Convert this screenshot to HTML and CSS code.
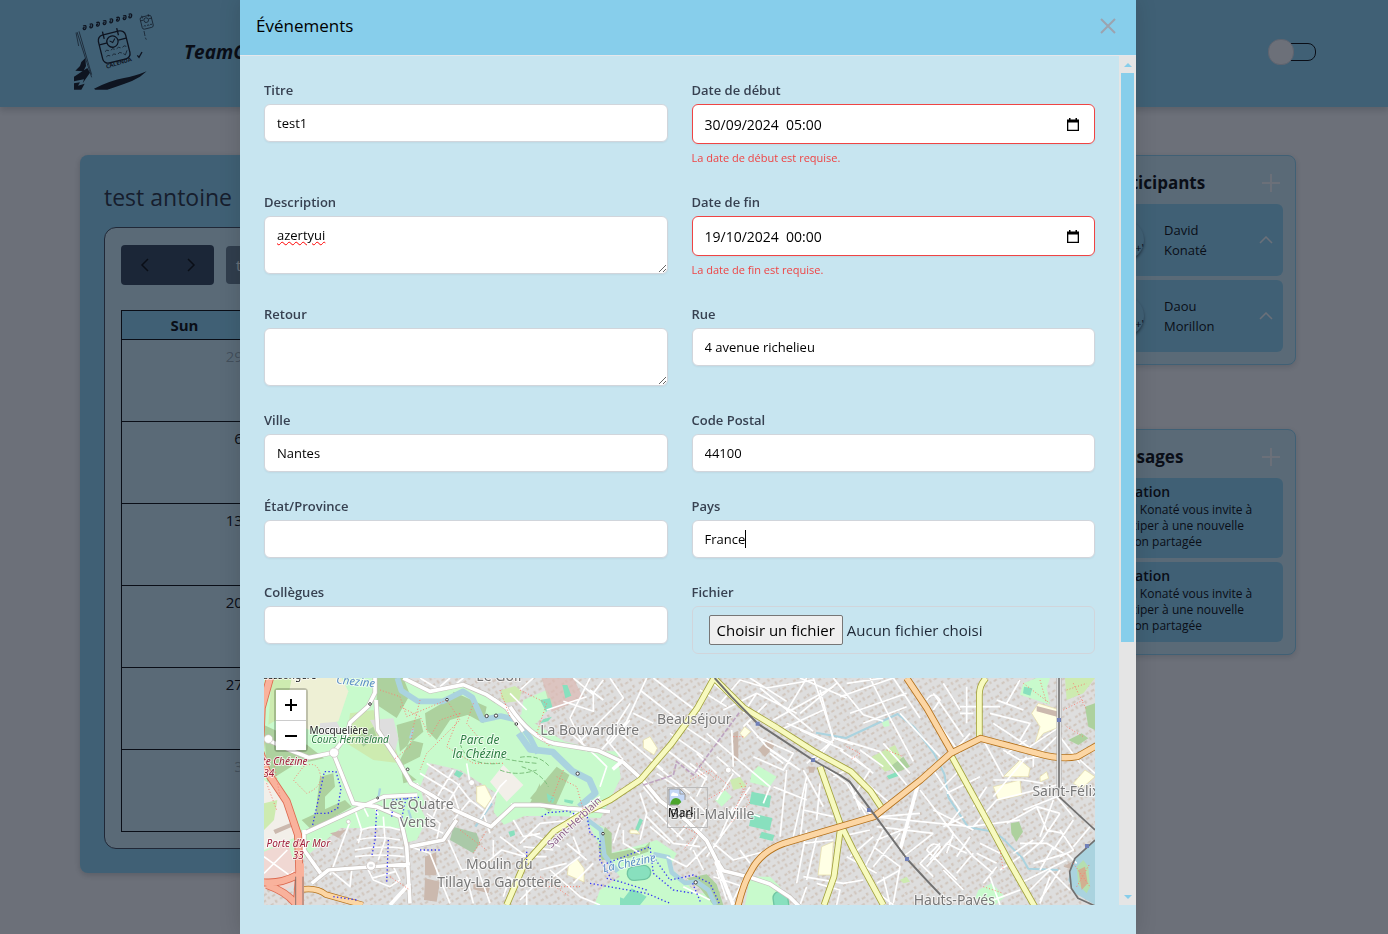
FILE: index.html
```html
<!DOCTYPE html>
<html lang="fr">
<head>
<meta charset="utf-8">
<title>TeamCalenda</title>
<link rel="stylesheet" href="styles.css">
</head>
<body>
<header class="topbar">
  <svg class="logo" viewBox="0 0 240 240" aria-hidden="true">
    <g fill="none" stroke="#0a0f18" stroke-width="3">
      <path stroke-width="2" d="M9 60l44 136M15 58l38 130M6 62l8 40"/>
      <g stroke-width="4">
        <path d="M27 42q10-4 9 4t-7 6q-4-4 3-6M47 37q10-4 9 4t-7 6q-4-4 3-6M67 32q10-4 9 4t-7 6q-4-4 3-6M87 27q10-4 9 4t-7 6q-4-4 3-6M107 22q10-4 9 4t-7 6q-4-4 3-6M127 17q10-4 9 4t-7 6q-4-4 3-6M147 12q10-4 9 4t-7 6q-4-4 3-6M164 7q10-4 9 4t-7 6q-4-4 3-6"/>
      </g>
      <g transform="rotate(-14 120 103)">
        <rect x="78" y="62" width="84" height="86" rx="16" stroke-width="4"/>
        <path stroke-width="4" d="M97 52v22M141 52v22M79 88h24M137 88h24"/>
        <circle cx="119" cy="88" r="17" stroke-width="4"/>
        <path d="M111 84l8 7 9-10"/>
        <path stroke-width="2" d="M90 112q6-6 12 0M108 112q6-6 12 0M126 112q6-6 12 0M144 112q6-6 12 0M90 128q6-6 12 0M108 128q6-6 12 0M126 128q6-6 12 0M142 131l5 5 8-12"/>
      </g>
      <g transform="rotate(-14 219 30)" stroke-width="2">
        <rect x="201" y="12" width="34" height="37" rx="6"/>
        <path d="M208 8v8M228 8v8M201 22h8M226 22h9M206 41q4-4 7 0M216 41q4-4 7 0M225 41q4-4 7 0"/>
        <circle cx="218" cy="24" r="7"/>
      </g>
      <path stroke-width="2" d="M210 57l3 15M214 77l3 6"/>
      <path stroke-width="4" d="M190 130l5 6 9-16"/>
    </g>
    <text class="logo-text" x="98" y="170" transform="rotate(-17 98 170)">CALENDA</text>
    <g fill="#0a0f18">
      <path d="M60 230q50-25 90-32 30-4 68-20l-20 16q-25 15-46 21-28 10-52 18H64z"/>
      <path d="M34 138l-12 12-4 12-14 14 24 2 8-16zM40 168l-40 26v14l30-6-4 12 22-32zM0 214v19h22l10-18-20 6 6-10z"/>
    </g>
  </svg>
  <span class="brand">TeamCalenda</span>
  <button class="switch" type="button" role="switch" aria-checked="false" aria-label="Thème"></button>
</header>

<main class="page">
  <section class="calendar">
    <h1>test antoine</h1>
    <div class="calendar-box">
      <div class="toolbar">
        <div class="nav">
          <button type="button" aria-label="Précédent"><svg viewBox="0 0 16 16"><path d="M11 2L5 8l6 6"/></svg></button>
          <button type="button" aria-label="Suivant"><svg viewBox="0 0 16 16"><path d="M5 2l6 6-6 6"/></svg></button>
        </div>
        <button class="today" type="button" disabled>today</button>
      </div>
      <table class="month">
        <thead><tr><th>Sun</th><th>Mon</th><th>Tue</th><th>Wed</th><th>Thu</th><th>Fri</th><th>Sat</th></tr></thead>
        <tbody>
          <tr><td class="other">29</td><td class="other">30</td><td>1</td><td>2</td><td>3</td><td>4</td><td>5</td></tr>
          <tr><td>6</td><td>7</td><td>8</td><td>9</td><td>10</td><td>11</td><td>12</td></tr>
          <tr><td>13</td><td>14</td><td>15</td><td>16</td><td>17</td><td>18</td><td>19</td></tr>
          <tr><td>20</td><td>21</td><td>22</td><td>23</td><td>24</td><td>25</td><td>26</td></tr>
          <tr><td>27</td><td>28</td><td>29</td><td>30</td><td>31</td><td class="other">1</td><td class="other">2</td></tr>
          <tr><td class="other">3</td><td class="other">4</td><td class="other">5</td><td class="other">6</td><td class="other">7</td><td class="other">8</td><td class="other">9</td></tr>
        </tbody>
      </table>
    </div>
  </section>
  <aside class="side">
    <section class="card">
      <div class="card-head"><h2>Participants</h2><button type="button" aria-label="Ajouter un participant"><svg viewBox="0 0 20 20"><path d="M10 1v18M1 10h18"/></svg></button></div>
      <div class="person"><span class="avatar">+'</span><span class="name">David Konaté</span><svg class="chevron" viewBox="0 0 14 8"><path d="M1 7l6-6 6 6"/></svg></div>
      <div class="person"><span class="avatar">+'</span><span class="name">Daou Morillon</span><svg class="chevron" viewBox="0 0 14 8"><path d="M1 7l6-6 6 6"/></svg></div>
    </section>
    <section class="card">
      <div class="card-head"><h2>Messages</h2><button type="button" aria-label="Nouveau message"><svg viewBox="0 0 20 20"><path d="M10 1v18M1 10h18"/></svg></button></div>
      <article class="message"><h3>Invitation</h3><p>David Konaté vous invite à<br>participer à une nouvelle<br>réunion partagée</p></article>
      <article class="message"><h3>Invitation</h3><p>David Konaté vous invite à<br>participer à une nouvelle<br>réunion partagée</p></article>
    </section>
  </aside>
</main>

<div class="overlay">
  <div class="modal" role="dialog" aria-modal="true" aria-labelledby="modal-title">
    <div class="modal-head">
      <h2 id="modal-title">Événements</h2>
      <button type="button" aria-label="Fermer"><svg viewBox="0 0 16 16"><path d="M1 1l14 14M15 1L1 15"/></svg></button>
    </div>
    <div class="modal-body">
      <form class="form">
        <div class="field"><label for="titre">Titre</label><input id="titre" type="text" value="test1"></div>
        <div class="field invalid"><label for="debut">Date de début</label>
          <div class="date"><input id="debut" type="text" value="30/09/2024  05:00"><button type="button" aria-label="Choisir la date de début"><svg viewBox="0 0 12 13"><path d="M2 0h1.500v1.500h5V0H10v1.500h2V13H0V1.500h2zM1.300 4.500v7.200h9.400V4.500z" fill-rule="evenodd"/></svg></button></div>
          <p class="error">La date de début est requise.</p></div>
        <div class="field"><label for="description">Description</label><textarea id="description" class="misspelled" spellcheck="false">azertyui</textarea></div>
        <div class="field invalid"><label for="fin">Date de fin</label>
          <div class="date"><input id="fin" type="text" value="19/10/2024  00:00"><button type="button" aria-label="Choisir la date de fin"><svg viewBox="0 0 12 13"><path d="M2 0h1.500v1.500h5V0H10v1.500h2V13H0V1.500h2zM1.300 4.500v7.200h9.400V4.500z" fill-rule="evenodd"/></svg></button></div>
          <p class="error">La date de fin est requise.</p></div>
        <div class="field"><label for="retour">Retour</label><textarea id="retour"></textarea></div>
        <div class="field"><label for="rue">Rue</label><input id="rue" type="text" value="4 avenue richelieu"></div>
        <div class="field"><label for="ville">Ville</label><input id="ville" type="text" value="Nantes"></div>
        <div class="field"><label for="cp">Code Postal</label><input id="cp" type="text" value="44100"></div>
        <div class="field"><label for="etat">État/Province</label><input id="etat" type="text"></div>
        <div class="field"><label for="pays">Pays</label><div class="focused"><input id="pays" type="text" value="France"><span class="caret"></span></div></div>
        <div class="field"><label for="collegues">Collègues</label><input id="collegues" type="text"></div>
        <div class="field"><label for="fichier">Fichier</label>
          <div class="file"><input id="fichier" type="file"><label for="fichier" class="file-button">Choisir un fichier</label><span>Aucun fichier choisi</span></div></div>
        <div class="map">
          <svg class="tiles" viewBox="72 24 2493 768" preserveAspectRatio="xMinYMin slice" role="img" aria-label="Carte de Nantes">
            <defs>
              <pattern id="houses" width="66" height="60" patternUnits="userSpaceOnUse" patternTransform="rotate(-32)">
                <path fill="#d0c5bc" d="M3 5h9v6H3zM17 3h6v9h-6zM30 8h12v6H30zM48 3h7v8h-7zM5 22h6v9H5zM19 25h11v6H19zM38 22h6v7h-6zM52 24h10v6H52zM2 43h10v6H2zM20 40h6v10h-6zM34 45h10v5H34zM51 41h7v9h-7z"/>
              </pattern>
            </defs>
            <rect x="72" y="24" width="2493" height="768" fill="#dedede"/>
            <rect x="72" y="24" width="2493" height="768" fill="url(#houses)"/>

            <!-- parks and woods -->
            <path fill="#c8facc" d="M72 24h420l70 40 80-20 90 20 110 70 130 80 120 30 40 0 10 80-60 120-220-10-70 30-50-60-130-60-130 130-180 0-110 90-110 20-68-30z"/>
            <path fill="#dedede" d="M540 350l30-70 90 20 110 70-20 120-60 0-70-60-70-40z"/>
            <path fill="url(#houses)" d="M540 350l30-70 90 20 110 70-20 120-60 0-70-60-70-40z"/>
            <path fill="#c8facc" d="M840 190l100 60 60 20 50 80 0 50-110 38-100 0zM850 90l70-30 20 40-50 60-50 0z"/>
            <path fill="#dedede" d="M500 24h340v120l-110-80-90-20-80 20z"/>
            <path fill="url(#houses)" d="M500 24h340v120l-110-80-90-20-80 20z"/>
            <path fill="#cdebb0" d="M785 60l40-12 20 15-8 30-40 5-15-15z"/>
            <path fill="#f2efe9" d="M72 330l60 40 40 130-100 40zM790 285l60 60-50 50-50-60z"/>
            <path fill="#eef0d5" d="M150 24h155l20 40-30 90-90 25-80-50z"/>
            <path fill="#cdebb0" d="M95 24h60l-20 110-50 30zM330 130l70-10 60 90 20 70-80-10-80-50zM72 400l40-10-10 60-30 30z"/>
            <path fill="#add19e" d="M72 165l130 60 50 40-90 20-80 50zM185 450l130-60 20 20-120 70zM410 24h80l20 50-40 70-60-40zM470 165l70-20 10 40-70 60zM555 130l85-50 60 50-70 20-40 60-30-30zM640 65l100 45-10 50-90-50zM480 290l60-30 10-40-40-10-30 60 10 70 40-10zM350 200l50-30 10 30-40 30z"/>
            <path fill="#add19e" d="M240 320l40-10 5 40-30 30 0 50-30 10zM870 400l30-60v60zM870 385l80-95 38 25-40 90-20 20z"/>
            <path fill="#aac9a8" d="M640 470l70 20 10 30-20 30-70-40z"/>
            <path fill="#dedede" d="M390 150l70-5 15 60-10 40-50-50zM240 160l50-5 20 35-70 5z"/>
            <path fill="#dbb9b4" opacity=".7" d="M905 24h95l30 60-95 42z"/>
            <path fill="#f0d8d3" d="M72 545l70-30 40 120-60 30-50-10z"/>
            <path fill="#c8facc" d="M1040 450l50 20 20 80 110-30 30-10 60 40-20 40 80 80 60 0 20 70h-400l30-80 60-40-40-50z"/>
            <path fill="#add19e" d="M1095 470l20 20 0 60 100-20 15-15-5 30-60 20-80 5-10-40zM1340 625l60-12 30 30 20 62h-30l-40-50z"/>
            <path fill="#c8facc" d="M1535 310l20-22 55 32-22 32-58-15zM1530 620l60 0 30 30 30 55h-135zM1425 390l30-30 20 20-30 30zM480 420l60-10 20 40-30 60-40 10z"/>
            <path fill="#cdebb0" d="M1470 330l30-10 20 30-40 10zM1895 260l70-35 30 60-60 20zM1980 630l20-10 10 15-20 5zM2480 90l50-20 35-46h-90z"/>
            <path fill="#add19e" d="M1950 290l40-30 20 30-45 20zM2312 460l25-5 12 30-20 30-15-25zM2485 210l40-20 20 15-30 20zM2535 110l30-10v80l-20-10z"/>
            <path fill="#c8facc" d="M2350 40l40-16h40l-10 30 10 50-90-30zM2215 660l40-20 40 40-30 25-60-20zM1925 155l20-5 4 18-18 3z"/>
            <g fill="#88e0be">
              <path d="M1535 365l58 12-5 36-60-12zM1535 430l62 14-8 38-62-14zM1565 485l38 10-5 18-40-10zM1185 480l14-35 10 6-16 36zM650 300l20 10-12 14-16-10zM900 90l30-5 8 30-20 10zM967 45l15 0 12 32-18 8zM1175 655l45 25-20 25-50-18zM1140 682l60 23h-60zM1940 318l30-12 5 12-28 10zM900 160l10-12 26-8-12 14z"/>
              <path d="M920 370l25 15-6 14-15-5zM973 388l28 4-4 10-24-6zM805 485l18-4 2 14-14 6zM2352 50l25 5-6 22-22-7z"/>
              <rect x="1162" y="588" width="70" height="42" rx="20" transform="rotate(-6 1195 610)" stroke="#6fc5a2" stroke-width="4"/>
              <rect x="1600" y="664" width="44" height="70" rx="20" stroke="#6fc5a2" stroke-width="4" transform="rotate(-8 1620 690)"/>
            </g>
            <g fill="#ffffe5" stroke="#e5dca5" stroke-width="2">
              <path d="M1210 210l20-10 22 35-10 20-32-22zM985 590l25-24 22 30 0 40-50-22zM710 350l25-5 20 40-20 30-25-20zM1500 190l14-20 18 15-20 20zM2375 130l20-30 65 20 0 50-50 20-25 30 15-50zM2290 320l50-50 30 25-5 25zM2260 350l80-20 5 45-70 15zM2500 340l35-40 30 20-40 35zM1745 530l35-15-6 100-40 0zM1170 480l20 0 10 12-30-2zM2400 320l20-15 6 20-25 10z"/>
            </g>
            <g fill="#cbb9ae">
              <path d="M1555 240l28-30 22 15-30 36zM1480 190l15-8 0 90-14 0zM555 560l34-14 0 70-34 0zM555 625l45 10-10 60-38-5zM270 490l50-12-25 26zM2390 108l70 18-4 16-66-18zM2470 590l35-20 15 35zM1705 290h22l-6 18h-14zM100 480l50-20 6 10-50 22zM700 640l50 12-5 18-45-12z"/>
            </g>

            <!-- water -->
            <g fill="none" stroke="#aad3df" stroke-linejoin="round">
              <path stroke-width="17" d="M472 24l12 38 50 32 75 0 60-30 28 18 30 68 55-12 50 12 40 56 22 44"/>
              <path stroke-width="20" d="M836 190l34 48 68 8 60 58 50 25 18 40-28 24-20 18"/>
              <path stroke-width="14" d="M1043 450l40 30 10 75 40 50M1240 552l45 10 10 45 40 32 35-4 35 25 22 45"/>
              <path stroke-width="6" d="M1728 188l90 16 155-72 50 40 60 80 30 60 12 70 60 90 60 10 40 20 60 60 20 34 90 4"/>
              <path stroke-width="7" d="M706 470l50-70M520 175l-10 30M505 420l10 30M415 385l5-30"/>
            </g>
            <path fill="#aad3df" d="M2565 510l-20 15-50 55-10 50 20 40 60 35z"/>
            <path fill="#b5dfb0" d="M2510 590l20-20 15 20 5 60-10 20-25-25z"/>
            <path fill="#f08070" opacity=".5" d="M2515 600l20-10 8 50-18 20z"/>

            <!-- residential streets -->
            <g fill="none" stroke="#fff" stroke-width="5" stroke-linejoin="round">
              <path d="M72 610l70-70M72 560l110 80M100 660l60-55M330 455l-60 160M270 600l60 50 5-50M345 420l20 60-10 40M365 400l20 40M400 400l15 36M430 440l5 70-20 60M360 480q60-20 120 0M350 510q60-15 130 0M345 540q70-15 145-5M345 560q70-10 150 0M380 590l20 40 50 20 30-20-20-40M395 625l70-20M510 530l60 20 60 150M625 510l40 90 60-10 60-50 70 20M540 350l60 40-20 50M560 280l90 60 40 50M540 310l100 60 20 60M530 340l50 60M580 400l60-100M610 420l50-80M640 450l50-60 40 30M560 430l40 30-10 50M540 460l70 30M690 340l-10-60M720 450l60-100 20-20M750 490l-20-60M760 510l0 50M680 620l20 80M700 560l50 140M780 500l80 60 60 0M820 450l30 50 50-10M815 400l0 15"/>
              <path d="M540 24l50 30M600 50l30-26M650 40l20-16M840 60l40-36M810 70l50 50M1000 24l60 50 0 50-90-30M1060 70l30-40M920 120l120-40M1050 24l-60 120 50 100M1110 24l40 60-130 130M1220 24l-60 130-80 90M1090 90l-40-30M970 170l100 90M1170 100l-70 110 50 60M1180 130l60 30M1200 60l140 110M1240 24l130 100M1140 190l130 110M1290 190l100 70M1320 160l90 60M1280 240l120 90M1240 280l110 90M1250 310l60 40-20 50M1170 150l-60 70M1080 350l20-60-30-30M990 440l90-60M1340 100l40 30M1380 60l80 50M1400 24l100 80"/>
              <path d="M1440 100l60-70 80 24 140-24M1450 120l100-50 120 60M1550 70l-40 60M1580 100l-70 70M1600 150l180-100M1620 180l130-60M1560 54l160 130M1700 24l-60 100M1640 160l140 60M1530 24l110 70M1680 24l140 60M1720 24l60 180 60 20"/>
              <path d="M1475 180l5 110M1400 190l190 160-20 50M1520 160l60 70 100 70M1550 200l110 50-30 50-90-40M1590 250l40 30M1370 250l60 60M1350 280l50 40-30 60M1430 260l70 60M1600 350l100 40M1590 240l90 60M1480 310l-50 80M1530 350l-60 90M1700 320l-40 180M1640 300l-20 200M1350 380l60 60M1200 370l20 60-20 80M1210 350l40 50M1220 440l80 80 80 10M1230 470l60 50M1240 420l90 90M1280 560l60 30 60-60M1310 500l70-80M1400 450l-50 90M1400 560l100-140 60 20M1420 520l60 50 110-30M1440 500l40-90M1500 540l30 40M1150 480l0 40 50 30M1140 460l-20 60M1360 540l30 60M1330 650l80 40M1430 600l30 90M1420 620l90 30M1480 690l40-80"/>
              <path d="M840 520l60-60 100-10M850 530l90 10M870 490l90 40M900 600l80-20M940 620l80-60M930 600l90 80 60 25M1000 640l60-60M840 690l60-60M800 620l60 30M790 680l20-60M860 660l0 45M980 520l60 50M1000 500l20 50"/>
              <path d="M1680 130l110-90M1680 180l130 60M1780 24l90 110 60 20M1820 40l110-16M1800 80l160-56M1830 130l170-60M1870 160l130-50M1890 24l60 120 70 130M1960 24l80 120M1740 60l40 150-50 60M1790 205l130 40 80 100M1780 210l-80 70M1800 240l90 60-50 80M1840 260l60 50M1860 240l70 50M1880 340l70 60M1840 380l60 60M1930 220l80 90M1980 130l120 130M1740 280l80 60 60 100M1780 320l40-20M1830 340l30 80M1690 300l60 110M1690 420l90 20M1700 340l-20 170M1740 340l-10 110M1700 480l-30 160M1730 500l-30 130M1690 520l90-10M1800 500l90-20M1900 440l290 30 150-20M1910 470l170 20M1910 510l100-40M1920 440l120-10M1990 560l90-70M1830 560l70-60M1870 600l60-120M1900 590l80-100M1910 640l70-40M1890 650l70 55M1930 620l20 85M1900 530l80 60-20 110M2040 360l100 130-20 60M2080 300l80 120-40 50M2100 360l60-60M2120 370l100-50M2080 420l120 60M2110 470l60-30M2130 480l70 80 60 50M2060 540l90 90M2100 520l-60 60 40 40M2140 500l-80 90M2090 560l30-40 60 30M2150 560l40-60M2110 600l60 60M2150 610l50-60M2220 520l60 30M2210 550l60 30M2200 470l70-80 200-50M2260 380l100-120M2240 350l-40 60M2050 100l110 150M2080 70l90 130M2110 40l50 80M2180 50v110M2160 110h120M2160 130h40M2190 190l-80 90M2180 220l-90 60M2230 210l60 110M2260 330l90 0 60 10M2300 250l60-40M2290 240l50 30 60-10M2300 100l40-70M2270 90l80 30M2250 130l120 30-30 50M2260 160l120 80 0 50M2370 230l90-60M2400 250l60-60M2460 200l60 80M2520 270l45 40"/>
              <path d="M2350 420l100-40 50 60M2300 460l90-50 70 20M2390 410l30 70 50 10M2440 390l-40 110M2460 430l-60 90M2340 520l80 0 50 30M2320 550l60-40M2350 560l60-50M2380 580l100-30 30 30M2400 600l40-70M2280 600l60-40M2340 640l140-70M2370 660l60-60 60 60M2400 690l60-90M2430 620l-30 80M2460 480l40 60-40 20M2500 450l-60 90M2500 530l50-60M2230 640l40-50M2260 690l80-30M2250 620l30 85M1730 640l70 20-10 45M1700 650l-20 55M1690 620l120 20 60-10M1820 560l90 50M2060 90q20-30 40 0l-20 30M2060 540q20-30 40-10l-30 40"/>
            </g>

            <!-- main streets -->
            <g fill="none" stroke-linejoin="round">
              <path stroke="#c5c0bc" stroke-width="15" d="M72 205l85 38 50 20 73-15 40-50 10-40 55-50 20-40 0-44M408 90l5 90 60 90 40 70 70 40 60 40 110 50 70-65 77 0 80 10 80 5 50 5M280 250l60 150 70 10 70 30 20 90 10 170M215 640l50-40 245-18M192 480l0 60 50 70M192 490l130-60 110-50 100-5M510 530l100-20 40-60M490 24l80 40 100-20 70 30 60 40 50 70"/>
              <path stroke="#fff" stroke-width="11" d="M72 205l85 38 50 20 73-15 40-50 10-40 55-50 20-40 0-44M408 90l5 90 60 90 40 70 70 40 60 40 110 50 70-65 77 0 80 10 80 5 50 5M280 250l60 150 70 10 70 30 20 90 10 170M215 640l50-40 245-18M192 480l0 60 50 70M192 490l130-60 110-50 100-5M510 530l100-20 40-60M490 24l80 40 100-20 70 30 60 40 50 70"/>
              <path stroke="#c5c0bc" stroke-width="15" d="M810 110q60 90 130 110l135 22 75 35 60 55 50 60 80 60 60 60 30 60 20 30 80 20 60 20 60 40 30 30 100 20"/>
              <path stroke="#fff" stroke-width="11" d="M810 110q60 90 130 110l135 22 75 35 60 55 50 60 80 60 60 60 30 60 20 30 80 20 60 20 60 40 30 30 100 20M1118 298l32-28M2035 340l-55 200M1430 580l50 125M510 640l-60 65"/>
              <path stroke="#a3a33b" stroke-width="20" d="M1422 24l-50 90-80 110-90 105-90 60-80 40-90 55-90 100-52 121M1422 24l90 90 100 60 110 70 110 60 60 60 40 60M1740 290l60 170 40 80 90 165M1802 470l-20 150-30 85M2130 250l110 200 70 130 80 140M2218 205l0-130q0-30 20-51"/>
              <path stroke="#f7fabf" stroke-width="15" d="M1422 24l-50 90-80 110-90 105-90 60-80 40-90 55-90 100-52 121M1422 24l90 90 100 60 110 70 110 60 60 60 40 60M1740 290l60 170 40 80 90 165M1802 470l-20 150-30 85M2130 250l110 200 70 130 80 140M2218 205l0-130q0-30 20-51"/>
              <path stroke="#b5721b" stroke-width="21" d="M1492 715q20-80 40-110 30-60 100-85l100-30 170-50 140-110 90-80 90-45 170 45q70 20 120 10l70-40M2000 24l60 90 80 140"/>
              <path stroke="#fcd6a4" stroke-width="16" d="M1492 715q20-80 40-110 30-60 100-85l100-30 170-50 140-110 90-80 90-45 170 45q70 20 120 10l70-40M2000 24l60 90 80 140"/>
              <path stroke="#b5721b" stroke-width="19" d="M178 660q50-10 80 14l110 31"/>
              <path stroke="#fcd6a4" stroke-width="15" d="M178 660q50-10 80 14l110 31"/>
              <path stroke="#dc6a50" stroke-width="24" d="M90 24l-25 90-5 130 20 60 60 90 34 100 4 110-8 110M60 636q60 8 110-20M80 645q60 20 90 60"/>
              <path stroke="#f9b29c" stroke-width="19" d="M90 24l-25 90-5 130 20 60 60 90 34 100 4 110-8 110M60 636q60 8 110-20M80 645q60 20 90 60"/>
              <path stroke="#f9b29c" stroke-width="16" d="M184 580v130"/>
              <path stroke="#555" stroke-width="2" d="M167 620v90M189 620v90"/>
            </g>
            <g fill="#fff" stroke="#c5c0bc" stroke-width="2"><circle cx="85" cy="207" r="13"/><circle cx="282" cy="248" r="14"/><circle cx="393" cy="587" r="14"/><circle cx="325" cy="455" r="6"/><circle cx="695" cy="338" r="9"/><circle cx="1432" cy="578" r="9" stroke="none"/><circle cx="1465" cy="300" r="9"/></g>
            <ellipse cx="393" cy="587" rx="7" ry="4" fill="#dedede"/>

            <!-- rail and tram -->
            <g fill="none" stroke="#707070" stroke-linejoin="round">
              <path stroke-width="6" d="M1424 24l50 56 79 81 166 109 80 45 30 20 60 80 112 152 60 65 40 42"/>
              <path stroke="#aaa" stroke-width="15" d="M2457 24v330"/>
              <path stroke="#fff" stroke-width="10" d="M2457 24v330"/>
              <path stroke-width="5" d="M2457 24v350M2457 380l108 100M2565 510l-60 55-16 40 5 50 20 30 50 22"/>
            </g>
            <g fill="#7080b8"><path d="M1547 155h12v12h-12zM1713 264h12v12h-12zM1881 414h12v12h-12zM1995 561h12v12h-12zM2451 144h12v12h-12zM2535 522h12v12h-12z"/></g>

            <!-- footpaths and cycle ways -->
            <g fill="none" stroke-width="3">
              <path stroke="#fa8072" stroke-dasharray="3 6" d="M420 60l60 20 20 60 120-50 40 60-100 100-20 50M480 110l60 30 30 60 30-50 60-20M540 90l-20 80-10 60-50 40M660 130l-40 100 80 50 90 0M700 100l-20 60 50 60M780 60l30 80M190 290q40-20 50 20t-40 60l-40-40 30-40M80 340l30 80M100 270l20 110M840 60l80 40-30 90 40 40M950 320l60 30 20 70M970 300l-40 100M660 480l80 60M700 550l40-70M450 620l60 40M900 620l90 60M900 650l120 0M1350 330l60-30 60 50-70 40M1370 280l60 50M1500 340l30 60-60 60M1520 340l-40 90M1330 470l40 20-40 50M1480 200l30 0M2350 40l80 60M2400 30l20 70M2480 60l60-20M2500 40l40 80M2470 120l60-30M2480 170l50 30M1820 230l40 20-30 20M1940 240l50 20M2280 540l10 60M2230 650l60 20M2500 580l50 70M2510 650l40-70"/>
              <path stroke="#3535f5" stroke-width="4" stroke-dasharray="4 7" d="M218 465l20-90 15-70h35l15 50-10 60-30 15h-40M457 390l80-8M455 440l5-40M410 420l-5 90-10 50M498 385l-15 70M445 510l-5 130M540 540h60M860 545v40M280 680l70 10M905 440l20-12 60-5 20 10M1040 430l10 60 30 20 0 60 30 50M1100 580l130-50 10 80 60 50 60 10M1050 640l170 30 70 30M1240 560l50 70 70-15 50 25 30 65M1100 625l40 10 80 25M1358 640l25 60"/>
              <path stroke="#7cc07c" stroke-dasharray="14 6" d="M840 262q60-10 90 30M845 290q60 20 80 60M700 240q80 30 190 40M780 300q50 20 110 0M660 220q20 70 120 60"/>
              <path stroke="#b08cb5" stroke-width="5" stroke-dasharray="14 5" opacity=".7" d="M1210 345l90-30 10-40 50 40 140-190"/>
            </g>
            <g fill="#fff" stroke="#444" stroke-width="3"><circle cx="390" cy="102" r="4"/><circle cx="503" cy="298" r="4"/><circle cx="621" cy="89" r="4"/><circle cx="740" cy="138" r="5"/><circle cx="768" cy="137" r="5"/><circle cx="829" cy="162" r="4"/><circle cx="1013" cy="311" r="5"/><circle cx="1089" cy="491" r="4"/><circle cx="1367" cy="637" r="5"/><circle cx="413" cy="384" r="3"/></g>

            <!-- place names -->
            <g class="place">
              <text x="778" y="33">Le Golf</text>
              <text x="534" y="417">Les Quatre</text><text x="534" y="471">Vents</text>
              <text x="778" y="598">Moulin du</text><text x="778" y="652">Tillay-La Garotterie</text>
              <text x="1049" y="195">La Bouvardière</text>
              <text x="1363" y="163">Beauséjour</text>
              <text x="1417" y="448">Breil-Malville</text>
              <text x="2478" y="377">Saint-Félix</text>
              <text x="2143" y="705">Hauts-Pavés</text>
            </g>
            <g class="minor">
              <text x="148" y="28">Lessongère</text><text x="296" y="192">Mocquelière</text>
              <text class="green" x="330" y="220">Cours Hermeland</text>
            </g>
            <g class="park"><text x="719" y="221">Parc de</text><text x="719" y="264">la Chézine</text></g>
            <g class="exit"><text x="112" y="284">Porte Chézine</text><text x="86" y="320">34</text><text x="175" y="531">Porte d'Ar Mor</text><text x="175" y="566">33</text></g>
            <g class="water"><text x="346" y="46" transform="rotate(6 346 46)">Chézine</text><text x="1170" y="590" transform="rotate(-12 1170 590)">La Chézine</text></g>
            <text class="district" x="1010" y="465" transform="rotate(-43 1010 465)">Saint-Herblain</text>
          </svg>
          <div class="zoom"><button type="button" aria-label="Zoom avant"><svg viewBox="0 0 12 12"><path d="M6 0v12M0 6h12"/></svg></button><button type="button" aria-label="Zoom arrière"><svg viewBox="0 0 12 12"><path d="M0 6h12"/></svg></button></div>
          <div class="marker">
            <svg viewBox="0 0 18 18"><path fill="#c5d8f7" d="M1 1h11l5 5v11H1z"/><path fill="#fff" d="M3 7q1-4 4-2 4 0 3 3H3z"/><path fill="#4da52c" d="M2 17q1-7 6-7t6 7z"/><path fill="#dedede" d="M9 18l9-8v8z"/><path fill="none" stroke="#999" d="M17 12V6l-5-5H1v16h9M12 1v5h5"/></svg>
            <span>Marker</span>
          </div>
        </div>
      </form>
      <div class="scrollbar" aria-hidden="true"><span class="up"></span><span class="thumb"></span><span class="down"></span></div>
    </div>
    <div class="modal-foot"></div>
  </div>
</div>
</body>
</html>
```
FILE: styles.css
```css
* { box-sizing: border-box; margin: 0; padding: 0; }
html, body { height: 100%; overflow: hidden; }
body {
  background: #f5f5f5;
  color: #000;
  font: 15px/24px "Open Sans", "Noto Sans", sans-serif;
}
button, input, textarea { font: inherit; color: inherit; }
button { background: none; border: 0; }

.topbar {
  display: flex;
  align-items: center;
  height: 107px;
  padding: 0 76px 4px 74px;
  background: #87ceeb;
  box-shadow: 0 4px 6px rgba(0, 0, 0, .15);
}
.logo { width: 80px; height: 80px; }
.logo-text { font: bold 17px "Open Sans", sans-serif; fill: #0a0f18; }
.brand { margin-left: 30px; font-size: 19px; font-weight: 700; font-style: italic; }
.switch {
  display: flex;
  align-items: center;
  width: 44px;
  height: 24px;
  margin-left: auto;
}
.switch::before {
  content: "";
  position: relative;
  flex: none;
  width: 24px;
  height: 24px;
  border: 1px solid #d1d5db;
  border-radius: 12px;
  background: #f5f5f5;
}
.switch::after {
  content: "";
  flex: none;
  width: 32px;
  height: 16px;
  margin-left: -12px;
  border: 1px solid #000;
  border-radius: 8px;
}

.page {
  display: flex;
  align-items: flex-start;
  gap: 36px;
  padding: 48px 92px 0 80px;
}
.calendar {
  flex: 1;
  padding: 24px;
  border-radius: 8px;
  background: #87ceeb;
  box-shadow: 0 2px 6px rgba(0, 0, 0, .2);
}
.calendar h1 { margin-bottom: 12px; font-size: 23px; font-weight: 500; line-height: 36px; color: #1f2937; }
.calendar-box { padding: 17px 16px 16px; border: 1px solid #374151; border-radius: 12px; background: #c7e5f0; }
.toolbar { display: flex; align-items: center; gap: 12px; margin-bottom: 25px; }
.nav { display: flex; padding-left: 1px; border-radius: 4px; background: #2c3e50; }
.nav button { display: flex; align-items: center; justify-content: center; width: 46px; height: 40px; }
.nav svg { width: 16px; height: 16px; fill: none; stroke: #000; stroke-width: 1.5; }
.today { height: 38px; padding: 0 10px; border-radius: 4px; background: #2c3e50; color: #fff; opacity: .65; }
.month { width: 100%; table-layout: fixed; border-collapse: collapse; }
.month th, .month td { border: 1px solid #000; }
.month th { height: 29px; background: #87ceeb; font-weight: 700; }
.month td { height: 82px; padding: 4px; text-align: right; vertical-align: top; }
.month .other { color: rgba(0, 0, 0, .3); }

.side { display: flex; flex-direction: column; gap: 64px; width: 216px; }
.card {
  display: flex;
  flex-direction: column;
  gap: 4px;
  padding: 12px;
  border: 1px solid #87ceeb;
  border-radius: 8px;
  background: #c7e5f0;
  box-shadow: 0 2px 6px rgba(0, 0, 0, .15);
}
.card-head { display: flex; align-items: center; justify-content: space-between; height: 32px; padding: 0 2px 2px 9px; }
.card-head h2 { font-size: 17px; font-weight: 700; }
.card-head svg { display: block; width: 20px; height: 20px; fill: none; stroke: #f3f4f6; stroke-width: 2; }
.person { display: flex; align-items: center; gap: 20px; height: 72px; padding: 0 10px 0 11px; border-radius: 6px; background: #87ceeb; }
.avatar {
  display: flex;
  align-items: flex-end;
  justify-content: flex-end;
  flex: none;
  width: 40px;
  height: 40px;
  border-radius: 20px;
  box-shadow: 0 2px 3px rgba(0, 0, 0, .5);
  font-size: 11px;
}
.name { flex: 1; font-size: 13px; font-weight: 500; line-height: 20px; }
.chevron { width: 14px; height: 8px; fill: none; stroke: #f3f4f6; stroke-width: 1.5; }
.message { height: 80px; padding: 4px 12px; border-radius: 6px; background: #87ceeb; white-space: nowrap; }
.message h3 { font-size: 14px; font-weight: 600; line-height: 20px; }
.message p { font-size: 12px; line-height: 16px; }

.overlay {
  position: fixed;
  inset: 0;
  z-index: 10;
  display: flex;
  justify-content: center;
  padding-right: 12px;
  background: rgba(17, 24, 39, .6);
}
.modal {
  display: flex;
  flex-direction: column;
  width: 896px;
  height: 100%;
  background: #c7e5f0;
  box-shadow: 0 0 20px rgba(0, 0, 0, .15);
}
.modal-head {
  display: flex;
  align-items: center;
  justify-content: space-between;
  flex: none;
  height: 56px;
  padding: 0 20px 4px 16px;
  border-bottom: 1px solid #e5e7eb;
  background: #87ceeb;
}
.modal-head h2 { font-size: 17px; font-weight: 500; }
.modal-head svg { display: block; width: 16px; height: 16px; fill: none; stroke: #9ca3af; stroke-width: 2; }
.modal-body { display: flex; flex: 1; min-height: 0; overflow: hidden; }
.modal-foot { flex: none; height: 29px; }

.form {
  display: grid;
  flex: 1;
  grid-template-columns: 1fr 1fr;
  align-content: start;
  gap: 24px;
  padding: 24px;
}
.field { display: flex; flex-direction: column; }
.field > label { margin-bottom: 4px; font-size: 13px; font-weight: 600; line-height: 20px; color: #374151; }
.field input[type="text"], .field textarea {
  width: 100%;
  height: 38px;
  padding: 0 12px;
  border: 1px solid #d1d5db;
  border-radius: 6px;
  outline: 0;
  background: #fff;
  box-shadow: 0 1px 2px rgba(0, 0, 0, .05);
  font-size: 13px;
  line-height: 20px;
}
.field textarea { display: block; height: 58px; padding: 8px 12px; resize: vertical; }
.field .misspelled { text-decoration: underline wavy #f00 1px; text-underline-offset: 1px; }
.date { display: flex; align-items: center; }
.field .date input[type="text"] { height: 40px; border-color: #ef4444; font-size: 14px; white-space: pre; }
.date button { width: 12px; height: 13px; margin: 0 16px 0 -28px; }
.date svg { display: block; width: 12px; height: 13px; }
.error { margin-top: 4px; font-size: 11px; line-height: 20px; color: #ef4444; }
.focused { position: relative; }
.caret { position: absolute; top: 10px; left: 53px; width: 1px; height: 18px; background: #000; }
.file { display: flex; align-items: center; gap: 4px; height: 48px; padding: 0 16px; border: 1px solid #d1d5db; border-radius: 6px; }
.file input { position: absolute; width: 1px; height: 1px; opacity: 0; }
.file-button { padding: 2px 7px; border: 1px solid #767676; border-radius: 2px; background: #efefef; }
.file span { color: #1f2937; }

.map { position: relative; grid-column: 1 / -1; height: 256px; overflow: hidden; background: #ddd; }
.tiles { display: block; width: 100%; height: 100%; }
.tiles text { font-family: "Noto Sans", sans-serif; text-anchor: middle; paint-order: stroke; stroke: rgba(255, 255, 255, .7); stroke-width: 6px; stroke-linejoin: round; }
.place text { font-size: 42px; fill: #777; }
.minor text { font-size: 30px; fill: #222; }
.minor .green { font-size: 30px; font-style: italic; fill: #2d7d43; }
.park text { font-size: 36px; font-style: italic; fill: #2d7d43; }
.exit text { font-size: 30px; font-style: italic; fill: #a0213c; }
.water text { font-size: 34px; font-style: italic; fill: #5a8fc4; }
.tiles .district { font-size: 31px; fill: #8d618b; }
.zoom { position: absolute; top: 10px; left: 10px; border: 2px solid rgba(0, 0, 0, .2); border-radius: 4px; background-clip: padding-box; }
.zoom button { display: flex; align-items: center; justify-content: center; width: 30px; height: 30px; background: #fff; }
.zoom button + button { border-top: 1px solid #ccc; }
.zoom svg { width: 12px; height: 12px; fill: none; stroke: #000; stroke-width: 2; }
.marker { position: absolute; top: 109px; left: 403px; width: 41px; height: 41px; border: 1px solid #bbb; }
.marker svg { display: block; width: 18px; height: 18px; }
.marker span { display: block; width: 25px; overflow: hidden; font-size: 12px; line-height: 14px; }

.scrollbar { display: flex; flex-direction: column; align-items: center; flex: none; width: 17px; background: #e5e5e5; }
.up, .down { border: 4px solid transparent; }
.up { margin: 3px 0 6px; border-bottom-color: #87ceeb; }
.down { margin: 0 0 2px; border-top-color: #87ceeb; }
.thumb { width: 13px; height: 67%; margin-bottom: auto; background: #87ceeb; }
```
